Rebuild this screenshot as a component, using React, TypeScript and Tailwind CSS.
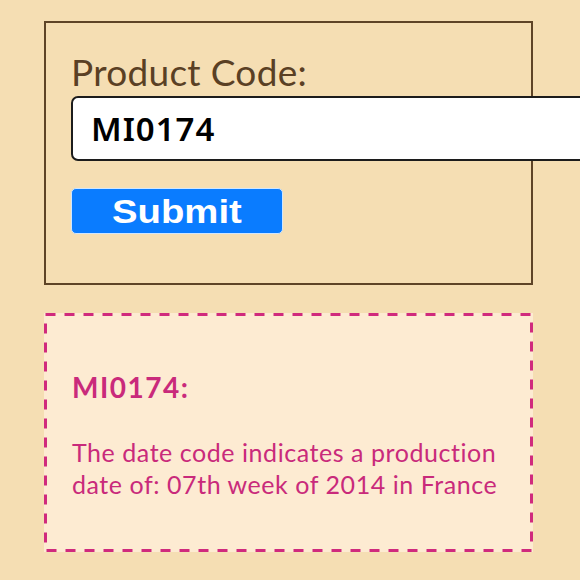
import React, { useState } from "react";

const App: React.FC = () => {
  const [code, setCode] = useState<string>("MI0174");

  return (
    <div className="w-[580px] h-[580px] overflow-hidden bg-[#f5deb3] pt-[21px] pl-[44px]">
      {/* formulaire */}
      <form
        className="w-[489px] h-[264px] border-2 border-[#5e4427] pl-[25px] pt-[29px] flex flex-col"
        onSubmit={(e) => e.preventDefault()}
      >
        <label
          htmlFor="code"
          className="text-[37px] leading-[40px] text-[#5a4024] tracking-[0.3px]"
          style={{ fontFamily: "Lato, sans-serif" }}
        >
          Product Code:
        </label>
        <input
          id="code"
          type="text"
          value={code}
          onChange={(e) => setCode(e.target.value)}
          className="mt-[4px] w-[540px] h-[65px] shrink-0 bg-white border-2 border-[#1c1c1c] rounded-[7px] pl-[18px] text-[33px] tracking-[1px] font-semibold text-black outline-none"
          style={{ fontFamily: "'Noto Sans', sans-serif" }}
        />
        <button
          type="submit"
          className="mt-[27px] w-[212px] h-[46px] bg-[#0a7cff] border border-[#cfe6ff] rounded-[5px] flex items-center justify-center text-white"
          style={{ fontFamily: "'Liberation Sans', Arial, sans-serif" }}
        >
          <span className="inline-block text-[33px] font-bold leading-none scale-x-[1.16]">
            Submit
          </span>
        </button>
      </form>

      {/* résultat */}
      <div
        className="relative mt-[28px] w-[489px] h-[239px] bg-[#fdebd2] pl-[28px] pt-[59px] text-[#c92a7b]"
        style={{ fontFamily: "Lato, sans-serif" }}
      >
        <svg className="absolute inset-0 pointer-events-none" width="489" height="239">
          <rect
            x="1.5"
            y="1.5"
            width="486"
            height="236"
            fill="none"
            stroke="#d02a7d"
            strokeWidth="3"
            strokeDasharray="10 9"
          />
        </svg>
        <p className="text-[28px] leading-[30px] font-bold tracking-[1.5px]">MI0174:</p>
        <p className="mt-[34px] pr-[20px] text-[25px] leading-[32px] tracking-[0.55px]">
          The date code indicates a production date of: 07th week of 2014 in France
        </p>
      </div>
    </div>
  );
};

export default App;
